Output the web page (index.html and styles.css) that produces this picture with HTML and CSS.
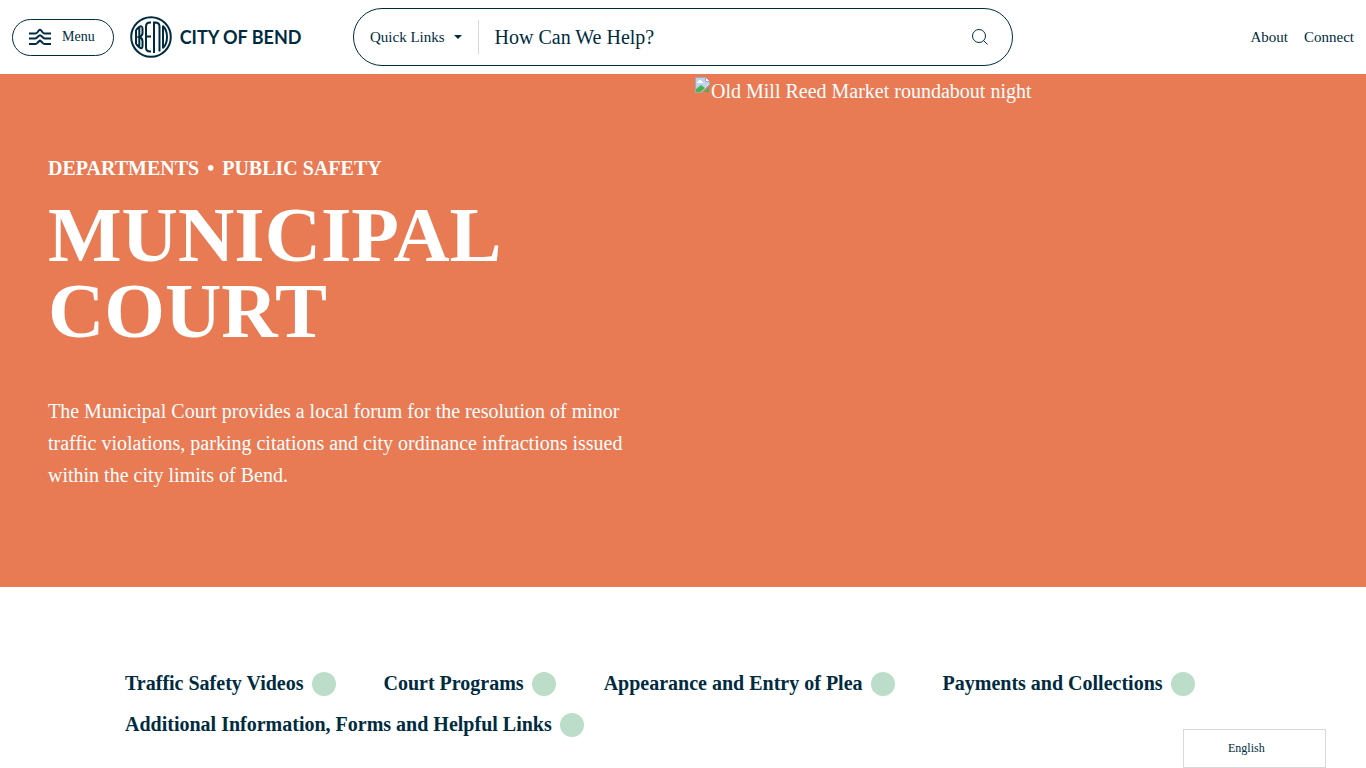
FILE: index.html
```html
<!DOCTYPE html>
<html lang="en">

<head>
  <meta charset="UTF-8">
  <title>Municipal Court | City of Bend</title>
  <meta name="viewport" content="width=device-width, initial-scale=1">
  <link rel="stylesheet" href="styles.css">
</head>

<body>
  <header class="site-header">
    <div class="brand">
      <button type="button" class="menu-btn">
        <svg class="menu-icon" viewBox="0 0 24 18" aria-hidden="true">
          <path d="M1 5.500h6.500q1 0 1.800-1l2-2.500q.7-.7 1.400 0l2 2.500q.8 1 1.800 1H23M1 10.500h6q1 0 2-1l2.300-2q.7-.5 1.400 0l2.300 2q1 1 2 1h6M1 16h6.500q1 0 1.800-1l2-2q.7-.7 1.400 0l2 2q.8 1 1.800 1H23" />
        </svg>
        Menu
      </button>
      <a href="#" class="logo">
        <svg class="logo-mark" viewBox="0 0 42 42" aria-hidden="true">
          <circle cx="21" cy="21" r="19.8" />
          <path d="M6 14v14M6 14l3-3q3.500-2 3.500 2v4q0 3-3.500 4q3.500 1 3.500 4v5q0 4-3.500 1l-3-3M9.300 11v20M21 6.500h-1q-4 0-4 4v21q0 4 4 4h1M16 20.500h5M24 37V6.500h1q4.500 0 4.500 4v25M33 9.500v23M33 10q4 4 4 11t-4 11" />
        </svg>
        <span>CITY OF BEND</span>
      </a>
    </div>
    <form class="search" role="search">
      <button type="button" class="quick-links">Quick Links <span class="caret"></span></button>
      <input type="text" placeholder="How Can We Help?" aria-label="How Can We Help?">
      <button type="submit" class="search-btn" aria-label="Search">
        <svg viewBox="0 0 16 16" aria-hidden="true">
          <circle cx="7" cy="7" r="6.500" />
          <path d="M11.500 11.500l4 4" />
        </svg>
      </button>
    </form>
    <nav class="top-nav">
      <a href="#">About</a>
      <a href="#">Connect</a>
    </nav>
  </header>

  <section class="hero">
    <div class="hero-text">
      <nav class="breadcrumb">
        <a href="#">DEPARTMENTS</a>
        <span>•</span>
        <a href="#">PUBLIC SAFETY</a>
      </nav>
      <h1>MUNICIPAL COURT</h1>
      <p>The Municipal Court provides a local forum for the resolution of minor traffic violations, parking citations and city ordinance infractions issued within the city limits of Bend.</p>
    </div>
    <div class="hero-image">
      <svg viewBox="0 0 16 16" aria-hidden="true">
        <path fill="#fff" stroke="#a5a9ad" d="M.5.5h10l4 4v3l-8 8h-6z" />
        <path fill="#bcd3f5" d="M1 1h9v4h4v2l-7 7H1z" />
        <path fill="#fff" d="M3 5q0-2 2-2 2 0 2 2h1v1H2V5z" />
        <path fill="#4caf50" d="M1 15v-3l5-4 4 3-4 4z" />
        <path fill="#fff" stroke="#a5a9ad" d="M10.500.5v4h4" />
        <path fill="#4caf50" d="M9 15l5-5v5z" />
      </svg>
      <span>Old Mill Reed Market roundabout night</span>
    </div>
  </section>

  <nav class="page-links">
    <a href="#">Traffic Safety Videos</a>
    <a href="#">Court Programs</a>
    <a href="#">Appearance and Entry of Plea</a>
    <a href="#">Payments and Collections</a>
    <a href="#">Additional Information, Forms and Helpful Links</a>
  </nav>

  <button type="button" class="language">English</button>
</body>

</html>
```

FILE: styles.css
```css
* {
  box-sizing: border-box;
}

body {
  font-family: "Liberation Serif", "Times New Roman", serif;
  font-size: 20px;
  color: #002b3f;
  background: #fff;
  margin: 0;
}

a {
  color: inherit;
  text-decoration: none;
}

button,
input {
  font: inherit;
  color: inherit;
  background: none;
  border: none;
  padding: 0;
}

button {
  cursor: pointer;
}

svg {
  display: block;
  fill: none;
}

/* header */
.site-header {
  display: grid;
  grid-template-columns: 1fr 660px 1fr;
  align-items: center;
  height: 74px;
  padding: 0 12px;
}

.brand {
  display: flex;
  align-items: center;
  gap: 16px;
}

.menu-btn {
  display: flex;
  align-items: center;
  gap: 10px;
  height: 37px;
  padding: 0 18px 0 15px;
  border: 1px solid #002b3f;
  border-radius: 20px;
  font-size: 14px;
}

.menu-icon {
  width: 24px;
  height: 18px;
  stroke: #002b3f;
  stroke-width: 2;
}

.logo {
  display: flex;
  align-items: center;
  gap: 8px;
  font-family: Lato, sans-serif;
  font-size: 18px;
  font-weight: bold;
  line-height: 20px;
  white-space: nowrap;
}

.logo-mark {
  width: 42px;
  height: 42px;
  stroke: #002b3f;
  stroke-width: 2;
}

.search {
  display: flex;
  align-items: center;
  height: 58px;
  padding: 0 24px 0 16px;
  border: 1px solid #002b3f;
  border-radius: 29px;
}

.quick-links {
  display: flex;
  align-items: center;
  gap: 9px;
  height: 34px;
  padding-right: 16px;
  border-right: 1px solid #d5dade;
  font-size: 15px;
}

.caret {
  border: 4px solid transparent;
  border-top-color: #002b3f;
  border-bottom: none;
}

.search input {
  flex: 1;
  min-width: 0;
  padding-left: 16px;
  outline: none;
}

.search input::placeholder {
  color: #002b3f;
  opacity: 1;
}

.search-btn svg {
  width: 16px;
  height: 16px;
  stroke: #002b3f;
}

.top-nav {
  display: flex;
  justify-content: flex-end;
  gap: 16px;
  font-size: 15px;
}

/* hero */
.hero {
  display: grid;
  grid-template-columns: 1fr 1fr;
  column-gap: 24px;
  min-height: 513px;
  background: #e87a54;
  color: #fff;
}

.hero-text {
  padding: 80px 48px;
}

.breadcrumb {
  display: flex;
  gap: 8px;
  font-size: 20px;
  font-weight: bold;
  line-height: 28px;
}

.hero h1 {
  margin: 15px 0 46px;
  font-size: 78px;
  line-height: 76px;
}

.hero p {
  margin: 0;
  line-height: 32px;
}

.hero-image {
  display: flex;
  align-items: flex-start;
  line-height: 34px;
}

.hero-image svg {
  width: 16px;
  height: 16px;
  margin-top: 3px;
}

/* page links */
.page-links {
  display: flex;
  flex-wrap: wrap;
  gap: 16px 48px;
  max-width: 1116px;
  margin: 84px auto 28px;
  font-weight: bold;
}

.page-links a {
  display: flex;
  align-items: center;
  gap: 8px;
  line-height: 25px;
}

.page-links a::after {
  content: "";
  width: 24px;
  height: 24px;
  border-radius: 50%;
  background: #bbddc9;
}

.language {
  position: fixed;
  right: 40px;
  bottom: 0;
  width: 143px;
  height: 39px;
  padding-left: 44px;
  border: 1px solid #d5dade;
  background: #fff;
  font-size: 12px;
  text-align: left;
}

@media (max-width: 900px) {
  .site-header,
  .hero {
    grid-template-columns: 1fr;
    height: auto;
  }

  .page-links {
    margin: 40px 24px;
  }
}
```
